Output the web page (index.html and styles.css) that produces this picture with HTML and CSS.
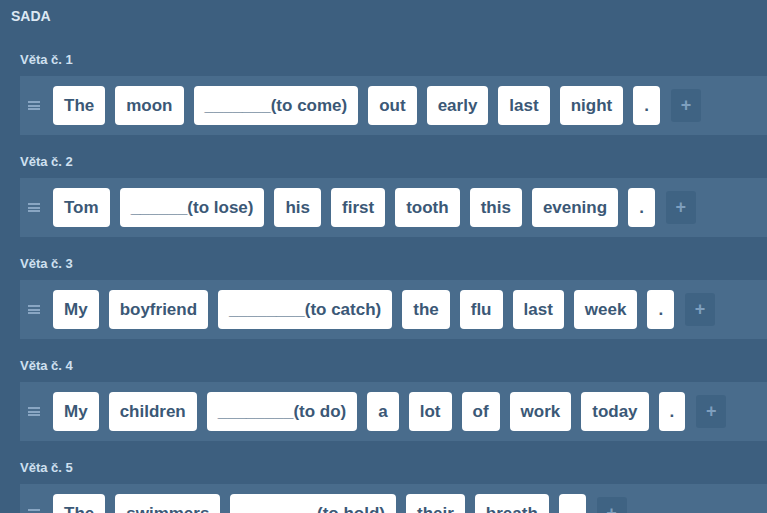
FILE: index.html
```html
<!DOCTYPE html>
<html lang="cs">
<head>
  <meta charset="UTF-8">
  <meta name="viewport" content="width=device-width, initial-scale=1.0">
  <title>Sada vět</title>
  <link rel="stylesheet" href="styles.css">
</head>
<body>
  <div class="set">
    <h1 class="set-title">SADA</h1>

    <!-- Sentence 1 -->
    <div class="sentence">
      <h2 class="sentence-label">Věta č. 1</h2>
      <div class="sentence-row">
        <span class="handle"></span>
        <span class="word">The</span>
        <span class="word">moon</span>
        <span class="word">_______(to come)</span>
        <span class="word">out</span>
        <span class="word">early</span>
        <span class="word">last</span>
        <span class="word">night</span>
        <span class="word">.</span>
        <button class="add-word">+</button>
      </div>
    </div>

    <!-- Sentence 2 -->
    <div class="sentence">
      <h2 class="sentence-label">Věta č. 2</h2>
      <div class="sentence-row">
        <span class="handle"></span>
        <span class="word">Tom</span>
        <span class="word">______(to lose)</span>
        <span class="word">his</span>
        <span class="word">first</span>
        <span class="word">tooth</span>
        <span class="word">this</span>
        <span class="word">evening</span>
        <span class="word">.</span>
        <button class="add-word">+</button>
      </div>
    </div>

    <!-- Sentence 3 -->
    <div class="sentence">
      <h2 class="sentence-label">Věta č. 3</h2>
      <div class="sentence-row">
        <span class="handle"></span>
        <span class="word">My</span>
        <span class="word">boyfriend</span>
        <span class="word">________(to catch)</span>
        <span class="word">the</span>
        <span class="word">flu</span>
        <span class="word">last</span>
        <span class="word">week</span>
        <span class="word">.</span>
        <button class="add-word">+</button>
      </div>
    </div>

    <!-- Sentence 4 -->
    <div class="sentence">
      <h2 class="sentence-label">Věta č. 4</h2>
      <div class="sentence-row">
        <span class="handle"></span>
        <span class="word">My</span>
        <span class="word">children</span>
        <span class="word">________(to do)</span>
        <span class="word">a</span>
        <span class="word">lot</span>
        <span class="word">of</span>
        <span class="word">work</span>
        <span class="word">today</span>
        <span class="word">.</span>
        <button class="add-word">+</button>
      </div>
    </div>

    <!-- Sentence 5 -->
    <div class="sentence">
      <h2 class="sentence-label">Věta č. 5</h2>
      <div class="sentence-row">
        <span class="handle"></span>
        <span class="word">The</span>
        <span class="word">swimmers</span>
        <span class="word">________(to hold)</span>
        <span class="word">their</span>
        <span class="word">breath</span>
        <span class="word">.</span>
        <button class="add-word">+</button>
      </div>
    </div>
  </div>
</body>
</html>
```

FILE: styles.css
```css
* {
  margin: 0;
  padding: 0;
  box-sizing: border-box;
}

body {
  font-family: "Liberation Sans", Arial, sans-serif;
  background-color: #3d5f7f;
  color: #3b5876;
  overflow: hidden;
}

.set-title {
  font-size: 14px;
  line-height: 17px;
  font-weight: bold;
  color: #dce8f3;
  padding: 8px 11px 8px;
}

.sentence {
  margin-top: 19px;
}

.sentence-label {
  font-size: 13px;
  line-height: 16px;
  font-weight: bold;
  color: #cfe0f0;
  margin-left: 20px;
  margin-bottom: 8px;
}

.sentence-row {
  display: flex;
  align-items: center;
  gap: 10px;
  margin-left: 20px;
  padding: 10px 0 10px 8px;
  background-color: #496c8c;
}

/* drag handle: three short bars */
.handle {
  width: 12px;
  height: 9px;
  margin-right: 3px;
  border-top: 2px solid #89a6c3;
  border-bottom: 2px solid #89a6c3;
  position: relative;
}

.handle::after {
  content: "";
  position: absolute;
  left: 0;
  right: 0;
  top: 1.5px;
  height: 2px;
  background-color: #89a6c3;
}

.word {
  flex-shrink: 0;
  height: 39px;
  line-height: 39px;
  padding: 0 11px;
  background-color: #fff;
  border-radius: 4px;
  font-size: 17px;
  font-weight: bold;
  white-space: nowrap;
}

.add-word {
  flex-shrink: 0;
  width: 30px;
  height: 33px;
  margin-left: 1px;
  border: none;
  border-radius: 3px;
  background-color: #3f6383;
  color: #7e9fbe;
  font-family: "Liberation Sans", Arial, sans-serif;
  font-size: 18px;
  font-weight: bold;
  cursor: pointer;
}
```
